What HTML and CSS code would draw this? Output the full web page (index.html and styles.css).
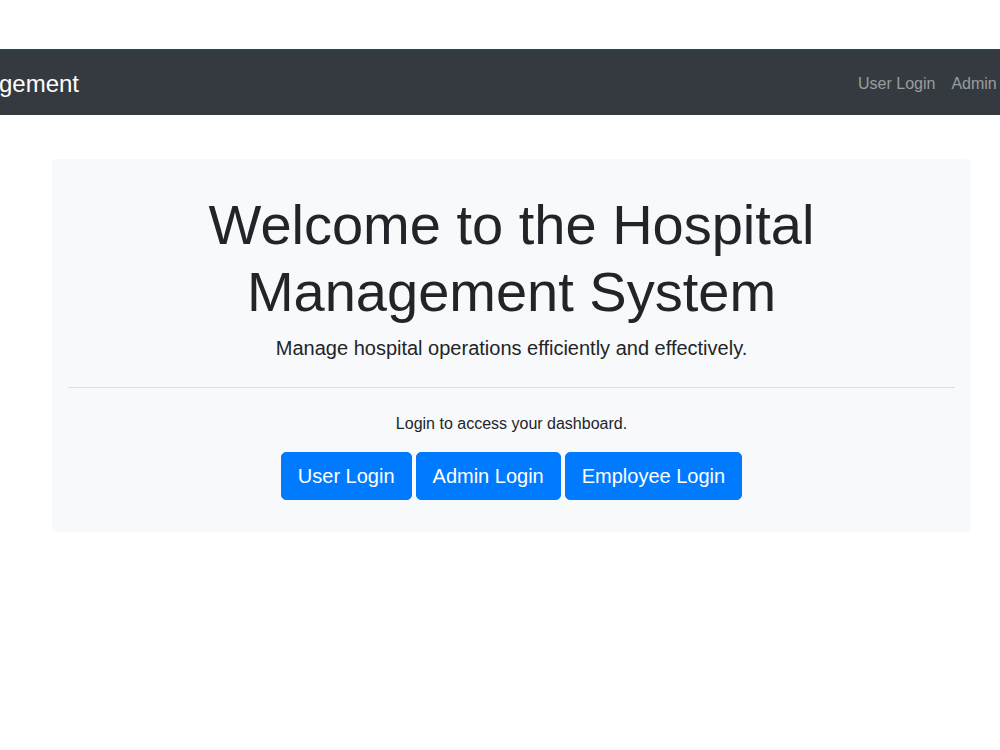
FILE: index.html
```html
<!DOCTYPE html>
<html lang="en">

<head>
    <meta charset="UTF-8">
    <meta name="viewport" content="width=device-width, initial-scale=1.0">
    <title>Hospital Management System</title>
    <link rel="stylesheet" href="styles.css">
</head>

<body>
    <!-- Top navigation -->
    <nav class="navbar">
        <div class="navbar-brand">
            <a href="#">Hospital Management</a>
        </div>
        <ul class="navbar-nav">
            <li><a href="#">User Login</a></li>
            <li><a href="#">Admin Login</a></li>
            <li><a href="#">Employee Login</a></li>
        </ul>
    </nav>

    <!-- Welcome panel -->
    <div class="jumbotron">
        <h1 class="display-title">Welcome to the Hospital Management System</h1>
        <p class="lead">Manage hospital operations efficiently and effectively.</p>
        <hr>
        <p>Login to access your dashboard.</p>
        <div class="login-buttons">
            <a class="btn" href="#">User Login</a>
            <a class="btn" href="#">Admin Login</a>
            <a class="btn" href="#">Employee Login</a>
        </div>
    </div>
</body>

</html>
```

FILE: styles.css
```css
html,
body {
    overflow: hidden;
}

body {
    font-family: 'Liberation Sans', Arial, sans-serif;
    background-color: #fff;
    color: #212529;
    margin: 0;
    padding: 49px 0 0;
    font-size: 16px;
    line-height: 1.5;
}

a {
    text-decoration: none;
}

.navbar {
    display: flex;
    align-items: center;
    height: 63px;
    padding-top: 1px;
    background-color: #343a40;
    border-top: 2px solid #2d4447;
    overflow: hidden;
    white-space: nowrap;
}

.navbar-brand {
    display: flex;
    justify-content: flex-end;
    width: 79px;
    flex-shrink: 0;
}

.navbar-brand a {
    color: #fff;
    font-size: 24px;
    line-height: 36px;
}

.navbar-nav {
    display: flex;
    list-style: none;
    margin: 0 0 0 771px;
    padding: 0;
    flex-shrink: 0;
}

.navbar-nav a {
    display: block;
    padding: 8px;
    color: rgba(255, 255, 255, 0.5);
}

.jumbotron {
    width: 919px;
    box-sizing: border-box;
    margin: 44px 0 0 52px;
    padding: 32px 16px;
    background-color: #f8f9fa;
    border-radius: 5px;
    text-align: center;
}

.display-title {
    font-size: 56px;
    font-weight: 300;
    line-height: 1.2;
    margin: 0 auto 8px;
    max-width: 680px;
}

.lead {
    font-size: 20px;
    font-weight: 300;
    margin: 0 0 16px;
}

hr {
    border: 0;
    border-top: 1px solid rgba(0, 0, 0, 0.1);
    margin: 24px 0;
}

p {
    margin: 0 0 16px;
}

.login-buttons {
    display: flex;
    justify-content: center;
    gap: 4px;
}

.btn {
    display: inline-block;
    padding: 8px 16px;
    font-size: 20px;
    line-height: 1.5;
    color: #fff;
    background-color: #007bff;
    border: 1px solid #007bff;
    border-radius: 5px;
}
```
